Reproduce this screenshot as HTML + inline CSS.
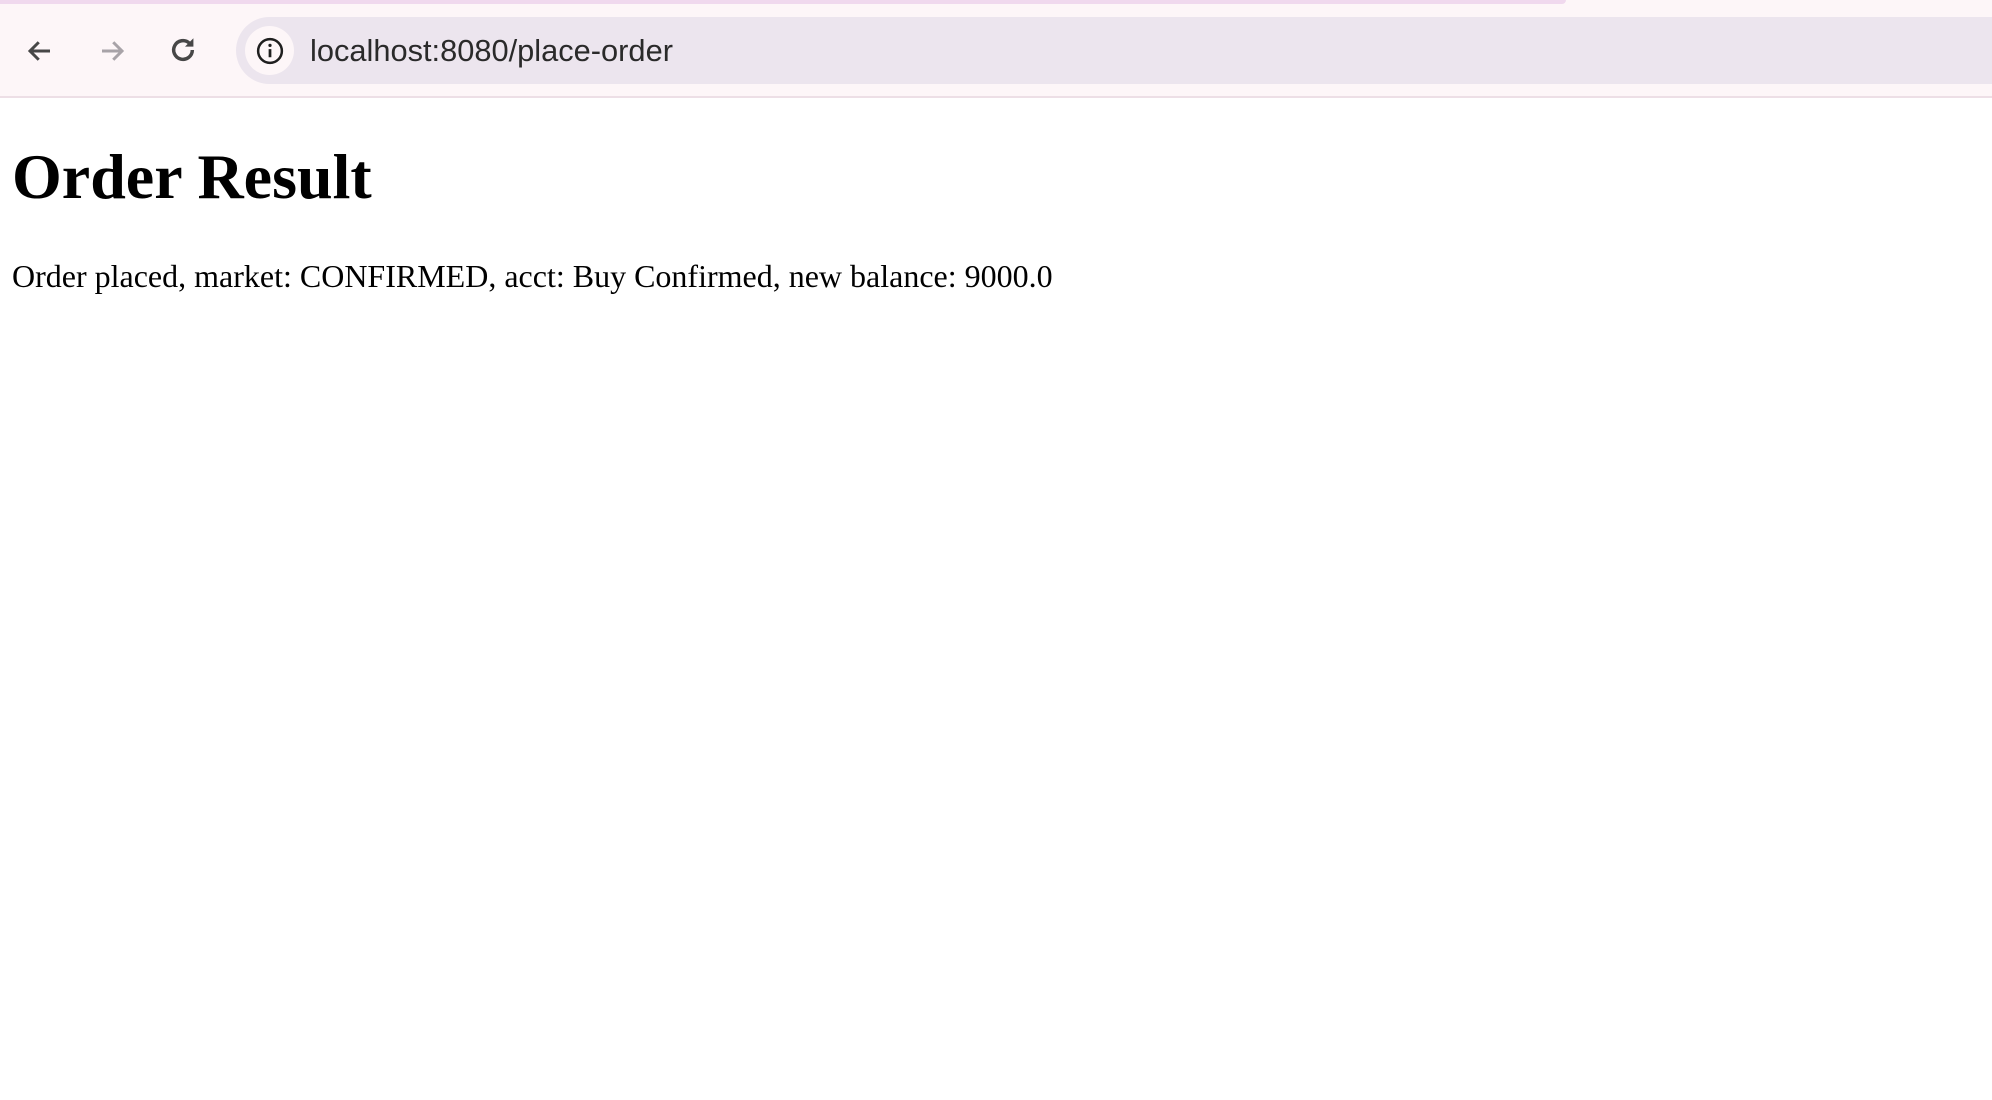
<!DOCTYPE html>
<html><head><meta charset="utf-8"><style>
html,body{margin:0;padding:0;width:1992px;height:1100px;overflow:hidden;background:#fff;}
.bar{position:absolute;left:0;top:0;width:1992px;height:96px;background:#fdf6f8;border-bottom:2px solid #eddfe6;}
.stripe{position:absolute;left:0;top:0;width:1566px;height:4px;background:#f0d9ee;border-radius:0 0 6px 0;}
.omni{position:absolute;left:236px;top:17px;width:1800px;height:67px;background:#ece5ee;border-radius:34px;}
.info{position:absolute;left:245px;top:26px;width:49px;height:49px;border-radius:50%;background:#fdf6f8;}
.url{position:absolute;left:310px;top:33px;font:30.8px "Liberation Sans",sans-serif;color:#2a2a2a;}
h1{position:absolute;left:12px;top:140px;margin:0;font:bold 64px "Liberation Serif",serif;color:#000;}
p{position:absolute;left:12px;top:258px;margin:0;font:32px "Liberation Serif",serif;color:#000;white-space:nowrap;}
svg{position:absolute;}
</style></head><body>
<div class="bar"><div class="stripe"></div>
<svg style="left:25px;top:36px" width="30" height="30" viewBox="0 0 24 24"><path d="M20 12H5M11 5l-7 7 7 7" fill="none" stroke="#474747" stroke-width="2.4"/></svg>
<svg style="left:97px;top:36px" width="30" height="30" viewBox="0 0 24 24"><path d="M4 12h15M13 5l7 7-7 7" fill="none" stroke="#a8a3a8" stroke-width="2.4"/></svg>
<svg style="left:167px;top:34px" width="32" height="32" viewBox="0 0 24 24"><path d="M19 12a7 7 0 1 1-2.2-5.1" fill="none" stroke="#474747" stroke-width="2.6"/><path d="M19.8 3.2v6.3h-6.3z" fill="#474747"/></svg>
<div class="omni"></div><div class="info"></div>
<svg style="left:255px;top:36px" width="30" height="30" viewBox="0 0 24 24"><circle cx="12" cy="12" r="9.5" fill="none" stroke="#1f1f1f" stroke-width="2"/><path d="M12 10.5v6.5" stroke="#1f1f1f" stroke-width="2.2"/><circle cx="12" cy="7.5" r="1.3" fill="#1f1f1f"/></svg>
<div class="url">localhost:8080/place-order</div>
</div>
<h1>Order Result</h1>
<p>Order placed, market: CONFIRMED, acct: Buy Confirmed, new balance: 9000.0</p>
</body></html>
